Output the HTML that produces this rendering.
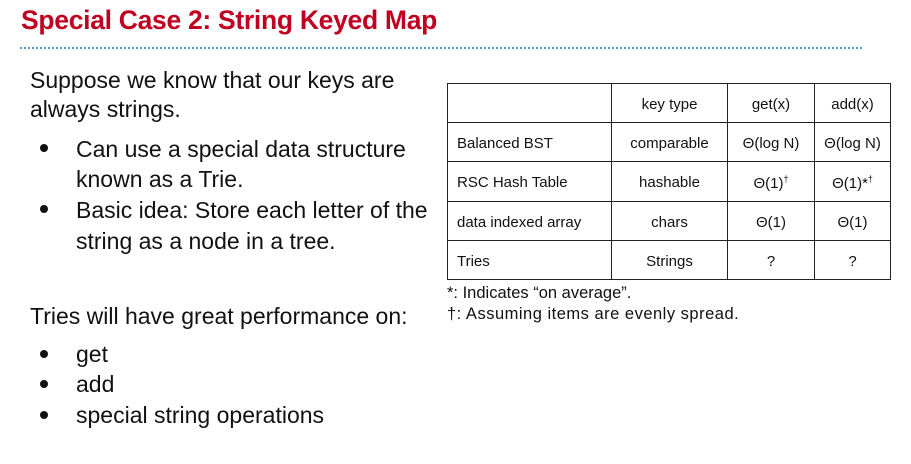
<!DOCTYPE html>
<html><head><meta charset="utf-8"><style>
body{margin:0;width:911px;height:464px;background:#fff;position:relative;overflow:hidden;font-family:"Liberation Sans",sans-serif;color:#111}
.t{position:absolute;white-space:nowrap}
h1{position:absolute;left:21px;top:5px;margin:0;font-size:26.5px;font-weight:bold;color:#c00020;letter-spacing:-0.3px}
.dots{position:absolute;left:20px;top:47px;width:842px;border-top:2px dotted #5b9bd5}
.b{font-size:23px;line-height:23px}
.bul{position:absolute;left:40px;width:8px;height:8px;border-radius:50%;background:#111}
table{position:absolute;left:447px;top:83px;border-collapse:collapse;font-size:15px}
tr{height:39.2px}
td{border:1.5px solid #222;padding:3px 0 0 0;text-align:center;vertical-align:middle}
td:first-child{text-align:left;padding-left:9px}
.n{position:absolute}
</style></head><body>
<h1>Special Case 2: String Keyed Map</h1>
<div class="dots"></div>
<div class="t b" style="left:30px;top:69px">Suppose we know that our keys are</div>
<div class="t b" style="left:30px;top:98px">always strings.</div>
<div class="bul" style="top:144px"></div><div class="t b" style="left:76px;top:138px">Can use a special data structure</div>
<div class="t b" style="left:76px;top:168px">known as a Trie.</div>
<div class="bul" style="top:205px"></div><div class="t b" style="left:76px;top:199px">Basic idea: Store each letter of the</div>
<div class="t b" style="left:76px;top:230px">string as a node in a tree.</div>
<div class="t b" style="left:30px;top:305px">Tries will have great performance on:</div>
<div class="bul" style="top:350px"></div><div class="t b" style="left:76px;top:343px">get</div>
<div class="bul" style="top:380px"></div><div class="t b" style="left:76px;top:373px">add</div>
<div class="bul" style="top:411px"></div><div class="t b" style="left:76px;top:404px">special string operations</div>
<table>
<tr><td style="width:154px"></td><td style="width:115px">key type</td><td style="width:86px">get(x)</td><td style="width:75px">add(x)</td></tr>
<tr><td>Balanced BST</td><td>comparable</td><td>Θ(log N)</td><td>Θ(log N)</td></tr>
<tr><td>RSC Hash Table</td><td>hashable</td><td>Θ(1)<span style="font-size:9px;vertical-align:6px">†</span></td><td>Θ(1)*<span style="font-size:9px;vertical-align:6px">†</span></td></tr>
<tr><td>data indexed array</td><td>chars</td><td>Θ(1)</td><td>Θ(1)</td></tr>
<tr><td>Tries</td><td>Strings</td><td>?</td><td>?</td></tr>
</table>
<div class="t n" style="left:447px;top:284px;font-size:16.5px">*: Indicates “on average”.</div>
<div class="t n" style="left:447px;top:305px;font-size:16.5px;letter-spacing:0.5px">†: Assuming items are evenly spread.</div>
</body></html>
